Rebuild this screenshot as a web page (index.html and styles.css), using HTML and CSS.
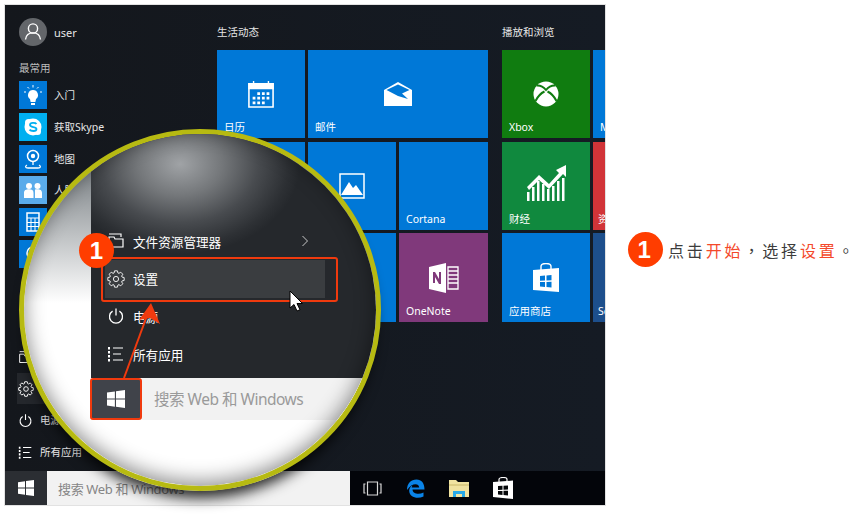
FILE: index.html
```html
<!DOCTYPE html>
<html lang="zh-CN">
  <head>
    <meta charset="UTF-8" />
    <title>点击开始，选择设置</title>
    <link rel="stylesheet" href="styles.css">
  </head>
  <body>
    <main class="page">
      <section class="screen">
        <div class="desktop">
          <nav class="menu">
            <div class="account">
              <span class="avatar">
                <svg viewBox="0 0 28 28" width="28" height="28"><circle cx="14" cy="10.5" r="4.6" fill="none" stroke="#fff" stroke-width="1.4"/><path d="M6.500 21.500c.6-4.500 3.500-6.600 7.500-6.600s6.900 2.100 7.500 6.600" fill="none" stroke="#fff" stroke-width="1.4"/></svg>
              </span>
              <span>user</span>
            </div>
            <h2 class="menu-title">最常用</h2>
            <ul class="apps">
              <li class="app">
                <span class="app-icon">
                  <svg viewBox="0 0 28 28" width="28" height="28"><path d="M14 9a5 5 0 0 1 3 9l-.6 3h-4.800l-.6-3a5 5 0 0 1 3-9z" fill="#fff"/><rect x="12" y="22" width="4" height="2" fill="#fff"/><path d="M14 4v2.500M7 11H5M23 11h-2M8.500 6l1.500 1.500M19.500 6L18 7.500" stroke="#fff" stroke-width="1"/></svg>
                </span>
                入门
              </li>
              <li class="app">
                <span class="app-icon app-icon-skype">
                  <svg viewBox="0 0 28 28" width="28" height="28"><circle cx="14" cy="14" r="8.500" fill="#fff"/><circle cx="9.500" cy="9.500" r="3.500" fill="#fff"/><circle cx="18.500" cy="18.500" r="3.500" fill="#fff"/><path d="M17.500 11c-1-1.300-6.500-1.800-6.500 1 0 2.800 6.500 1.300 6.500 4 0 2.800-5.700 2.300-7 .6" fill="none" stroke="#00aff0" stroke-width="1.800"/></svg>
                </span>
                获取Skype
              </li>
              <li class="app">
                <span class="app-icon">
                  <svg viewBox="0 0 28 28" width="28" height="28"><circle cx="14" cy="11" r="5.500" fill="none" stroke="#fff" stroke-width="1.500"/><circle cx="14" cy="11" r="2.200" fill="#fff"/><path d="M8 20c-2 1-2 3 1 3h10c3 0 3-2 1-3M14 17v3" fill="none" stroke="#fff" stroke-width="1.300"/></svg>
                </span>
                地图
              </li>
              <li class="app">
                <span class="app-icon app-icon-people">
                  <svg viewBox="0 0 28 28" width="28" height="28"><circle cx="10" cy="10" r="3" fill="#fff"/><circle cx="18.500" cy="10" r="3" fill="#fff"/><path d="M5 22v-5c0-3 2-3.800 5-3.800s4.500 1 4.500 3.800v5zM16 13.500c3-.8 7-.5 7 3.500v5h-7z" fill="#fff"/></svg>
                </span>
                人脉
              </li>
              <li class="app">
                <span class="app-icon">
                  <svg viewBox="0 0 28 28" width="28" height="28"><rect x="8" y="5" width="12" height="18" fill="none" stroke="#fff" stroke-width="1.500"/><path d="M8 10h12M8 14.500h12M8 18.500h12M12 10v13M16 10v13" stroke="#fff"/></svg>
                </span>
                计算器
              </li>
              <li class="app">
                <span class="app-icon">
                  <svg viewBox="0 0 28 28" width="28" height="28"><circle cx="14" cy="13" r="6" fill="none" stroke="#fff" stroke-width="1.500"/></svg>
                </span>
                闹钟
              </li>
            </ul>
            <ul class="system">
              <li class="app">
                <svg viewBox="0 0 18 18" width="15" height="15"><path d="M2 5h5l1 2h8v8H2zM2 2h12v3" fill="none" stroke="#fff" stroke-width="1.200"/></svg>
                文件资源管理器
              </li>
              <li class="app app-current">
                <svg viewBox="0 0 18 18" width="16" height="16"><circle cx="9" cy="9" r="2.600" fill="none" stroke="#fff" stroke-width="1.100"/><path d="M14.990 7.050L17.170 7.560V10.440L14.990 10.950L14.610 11.860L15.800 13.760L13.760 15.800L11.860 14.610L10.950 14.990L10.440 17.170H7.560L7.050 14.990L6.140 14.610L4.240 15.800L2.200 13.760L3.390 11.860L3.010 10.950L.83 10.440V7.560L3.010 7.050L3.390 6.140L2.200 4.240L4.240 2.200L6.140 3.390L7.050 3.010L7.560 .83H10.440L10.950 3.010L11.860 3.390L13.760 2.200L15.800 4.240L14.610 6.140z" fill="none" stroke="#fff" stroke-width="1.100"/></svg>
                设置
              </li>
              <li class="app">
                <svg viewBox="0 0 18 18" width="15" height="15"><path d="M5.600 4.100a6.500 6.500 0 1 0 6.800 0M9 1.500v7" fill="none" stroke="#fff" stroke-width="1.300"/></svg>
                电源
              </li>
              <li class="app">
                <svg viewBox="0 0 18 18" width="15" height="15"><path d="M2 2v2.500M2 6v2.500M2 10v2.500M2 14v2.500" stroke="#fff" stroke-width="2"/><path d="M6 3h10M6 9h8M6 15h10" stroke="#fff" stroke-width="1.200"/></svg>
                所有应用
              </li>
            </ul>
          </nav>

          <section class="group group-live">
            <h2 class="group-title">生活动态</h2>
            <div class="tiles">
              <div class="tile">
                <svg viewBox="0 0 28 30" width="26" height="28"><path d="M1 4h26v25H1z" fill="none" stroke="#fff" stroke-width="1.700"/><path d="M1 4h26v5H1zM6 1v5M22 1v5" fill="#fff" stroke="#fff" stroke-width="1.500"/><path d="M10 13h3v3h-3zM15 13h3v3h-3zM20 13h3v3h-3zM5 18h3v3H5zM10 18h3v3h-3zM15 18h3v3h-3zM20 18h3v3h-3zM5 23h3v3H5zM10 23h3v3h-3zM15 23h3v3h-3z" fill="#fff"/></svg>
                <span class="tile-name">日历</span>
              </div>
              <div class="tile tile-wide">
                <svg viewBox="0 0 28 24" width="28" height="24"><path d="M0 8L14 0l14 8v16H0z" fill="#fff"/><path d="M2.500 8L14 2.500 25.500 8 18 11.500l6 5.500-10-3z" fill="#0078d7"/></svg>
                <span class="tile-name">邮件</span>
              </div>
              <div class="tile"></div>
              <div class="tile">
                <svg viewBox="0 0 26 26" width="26" height="26"><path d="M1 1h24v24H1z" fill="none" stroke="#fff" stroke-width="1.500"/><path d="M2 22l8-13 4 6 3-3 7 10z" fill="#fff"/></svg>
              </div>
              <div class="tile">
                <span class="tile-name">Cortana</span>
              </div>
              <div class="tile"></div>
              <div class="tile"></div>
              <div class="tile tile-onenote">
                <svg viewBox="0 0 30 30" width="30" height="30"><path d="M0 4l17-4v30L0 26z" fill="#fff"/><path d="M4 20V9h2l4 7V9h2v12h-2l-4-7v6z" fill="#80397b"/><path d="M19 4h10v22H19zM19 8h10M19 12h10M19 16h10M19 20h10" fill="none" stroke="#fff" stroke-width="1.300"/></svg>
                <span class="tile-name">OneNote</span>
              </div>
            </div>
          </section>

          <section class="group">
            <h2 class="group-title">播放和浏览</h2>
            <div class="tiles tiles-cut">
              <div class="tile tile-xbox">
                <svg viewBox="0 0 26 26" width="26" height="26"><circle cx="13" cy="13" r="12.500" fill="#fff"/><path d="M3.500 4.500Q9 4 13 9Q17 4 22.500 4.500M2.500 20Q6 13 11.500 10.500M23.500 20Q20 13 14.500 10.500" fill="none" stroke="#107c10" stroke-width="2"/></svg>
                <span class="tile-name">Xbox</span>
              </div>
              <div class="tile"><span class="tile-name">M</span></div>
              <div class="tile tile-finance">
                <svg viewBox="0 0 40 38" width="40" height="38"><path d="M1 23L13 11l10 9L33 9l-3-3 10-5v12l-3-3-14 15-10-9L3 26z" fill="#fff"/><path d="M1 37v-9h2.500v9zM6 37V23h2.500v14zM11 37V17h2.500v20zM16 37V20h2.500v17zM21 37V25h2.500v12zM26 37V22h2.500v15zM31 37V17h2.500v20zM36 37V14h2.500v23z" fill="#fff"/></svg>
                <span class="tile-name">财经</span>
              </div>
              <div class="tile tile-red"><span class="tile-name tile-name-cut">资</span></div>
              <div class="tile">
                <svg viewBox="0 0 26 30" width="26" height="30"><path d="M0 7l26-2v24L0 27z" fill="#fff"/><path d="M8 7V3.500C8 1 10 .5 13 .5s5 .5 5 3V6" fill="none" stroke="#fff" stroke-width="1.400"/><path d="M7 13l5-.5v5l-5 .2zM13.500 12.400l5-.4v5.200l-5 .2zM7 19l5-.1v5l-5-.3zM13.500 18.900l5-.1v5.600l-5-.4z" fill="#0078d7"/></svg>
                <span class="tile-name">应用商店</span>
              </div>
              <div class="tile tile-solitaire"><span class="tile-name tile-name-cut">So</span></div>
            </div>
          </section>
        </div>

        <footer class="taskbar">
          <span class="start">
            <svg viewBox="0 0 16 16" width="16" height="16"><path d="M0 2.300l7-1v6.300H0zM8 1.100L16 0v7.600H8zM0 8.500h7v6.300l-7-1zM8 8.500h8V16l-8-1.100z" fill="#fff"/></svg>
          </span>
          <span class="search">搜索 Web 和 Windows</span>
          <span class="tray">
            <svg viewBox="0 0 19 15" width="19" height="15"><path d="M4.500 1h10v13h-10zM2.500 3H1v9h1.500M16.500 3H18v9h-1.500" fill="none" stroke="#d8d8d8" stroke-width="1.200"/></svg>
            <svg viewBox="0 0 19 19" width="19" height="19"><path d="M1 11C1 4.500 5 .5 10.500.5 15.500.5 18.500 4 18.500 10.500H6.500c.3 4.500 6.500 5.500 11 3v4C11 20.500 3 18 3.200 11.500 3.500 9 4.500 7.500 6.500 6.500c-.5 1-.7 1.500-.8 2h7.500C13 4 6 3.500 1 11z" fill="#0a84e8"/></svg>
            <svg viewBox="0 0 20 17" width="20" height="17"><path d="M0 0h7l2 2h11v15H0z" fill="#f0e3a0"/><path d="M0 5h20" stroke="#c9b868"/><path d="M4 17v-6h12v6h-3v-3H7v3z" fill="#27a9e8"/></svg>
            <svg viewBox="0 0 20 22" width="20" height="22"><path d="M0 5l20-1.500V22L0 20z" fill="#fff"/><path d="M6 5V2.500C6 1 8 .5 10 .5s4 .5 4 2V4" fill="none" stroke="#fff" stroke-width="1.200"/><path d="M5 9l4.500-.3v4L5 13zM10.500 8.700l4.500-.3v4.200l-4.500.2zM5 14l4.500-.1v4L5 17.600zM10.500 13.800l4.500-.1v4.700l-4.500-.4z" fill="#05070a"/></svg>
          </span>
        </footer>
      </section>

      <section class="lens">
        <div class="lens-panel">
          <div class="lens-row">
            <svg viewBox="0 0 18 18" width="18" height="18"><path d="M2 5h5l1 2h8v8H2zM2 2h12v3" fill="none" stroke="#fff" stroke-width="1.200"/></svg>
            文件资源管理器
            <svg class="chevron" viewBox="0 0 8 12" width="8" height="12"><path d="M1.500 1l5 5-5 5" fill="none" stroke="#c8c8c8"/></svg>
          </div>
          <div class="lens-row lens-row-active">
            <svg viewBox="0 0 18 18" width="18" height="18"><circle cx="9" cy="9" r="2.600" fill="none" stroke="#fff" stroke-width=".9"/><path d="M14.990 7.050L17.170 7.560V10.440L14.990 10.950L14.610 11.860L15.800 13.760L13.760 15.800L11.860 14.610L10.950 14.990L10.440 17.170H7.560L7.050 14.990L6.140 14.610L4.240 15.800L2.200 13.760L3.390 11.860L3.010 10.950L.83 10.440V7.560L3.010 7.050L3.390 6.140L2.200 4.240L4.240 2.200L6.140 3.390L7.050 3.010L7.560 .83H10.440L10.950 3.010L11.860 3.390L13.760 2.200L15.800 4.240L14.610 6.140z" fill="none" stroke="#fff" stroke-width=".9"/></svg>
            设置
          </div>
          <div class="lens-row">
            <svg viewBox="0 0 18 18" width="18" height="18"><path d="M5.600 4.100a6.500 6.500 0 1 0 6.800 0M9 1.500v7" fill="none" stroke="#fff" stroke-width="1.300"/></svg>
            电源
          </div>
          <div class="lens-row">
            <svg viewBox="0 0 18 18" width="18" height="18"><path d="M2 2v2.500M2 6v2.500M2 10v2.500M2 14v2.500" stroke="#fff" stroke-width="2"/><path d="M6 3h10M6 9h8M6 15h10" stroke="#fff" stroke-width="1.200"/></svg>
            所有应用
          </div>
        </div>
        <div class="lens-bar">
          <span class="lens-start">
            <svg viewBox="0 0 16 16" width="18" height="18"><path d="M0 2.300l7-1v6.300H0zM8 1.100L16 0v7.600H8zM0 8.500h7v6.300l-7-1zM8 8.500h8V16l-8-1.100z" fill="#fff"/></svg>
          </span>
          <span class="lens-search">搜索 Web 和 Windows</span>
        </div>
      </section>

      <div class="mark"></div>
      <svg class="arrow" viewBox="0 0 60 90" width="60" height="90"><path d="M6 86L30 21" stroke="#f03a0e" stroke-width="2"/><path d="M33 11l9 21-10-6-11 2z" fill="#f03a0e"/></svg>
      <svg class="cursor" viewBox="0 0 15 22" width="15" height="22"><path d="M1 1v17l4-3.500L8 21l3-1.300-3-6.200h5.500z" fill="#fff" stroke="#000"/></svg>
      <span class="badge badge-lens">1</span>

      <p class="note" lang="zh-TW">
        <span class="badge">1</span>
        <span>点击<em>开始</em>，选择<em>设置</em>。</span>
      </p>
    </main>
  </body>
</html>
```

FILE: styles.css
```css
* {
  box-sizing: border-box;
}

body {
  margin: 0;
  background: #fff;
  font-family: "Noto Sans", "Noto Sans CJK SC", sans-serif;
}

h2,
p,
ul {
  margin: 0;
  padding: 0;
  font-weight: 400;
}

ul {
  list-style: none;
}

svg {
  display: block;
  flex: none;
}

.page {
  position: relative;
  width: 854px;
  height: 522px;
  padding: 5px;
  overflow: hidden;
}

.screen {
  display: flex;
  flex-direction: column;
  width: 600px;
  height: 500px;
  overflow: hidden;
  background: linear-gradient(90deg, #14171c, #151b24);
  outline: 1px solid #e2e2e2;
  color: #e6e6e6;
  font-size: 10.5px;
}

.desktop {
  display: flex;
  flex: 1;
  min-height: 0;
}

/* left column */
.menu {
  display: flex;
  flex-direction: column;
  flex: none;
  width: 212px;
  padding: 13px 0 5px 14px;
}

.account {
  display: flex;
  align-items: center;
  gap: 7px;
  font-size: 11px;
}

.avatar {
  width: 28px;
  height: 28px;
  border-radius: 50%;
  background: #63666a;
}

.menu-title {
  margin: 14px 0 5px;
  font-size: 10.5px;
  line-height: 16px;
  color: #bdbdbd;
}

.apps {
  display: flex;
  flex-direction: column;
  gap: 3.8px;
}

.app {
  display: flex;
  align-items: center;
  gap: 7px;
  height: 28px;
  line-height: 26px;
}

.app-icon {
  width: 28px;
  height: 28px;
  background: #0078d7;
}

.app-icon-skype {
  background: #00aff0;
}

.app-icon-people {
  background: #5aabea;
}

.system {
  display: flex;
  flex-direction: column;
  gap: 3.600px;
  margin-top: auto;
}

.system .app {
  margin-left: -1px;
}

.system .app-current {
  gap: 6px;
  height: 31px;
  margin-block: -1.500px;
  margin-left: -2px;
  padding-left: 1px;
  background: #24272c;
}

/* tiles */
.group {
  flex: none;
  padding-top: 19px;
  padding-right: 14px;
}

.group-title {
  height: 26px;
  font-size: 10.5px;
  line-height: 16px;
}

.tiles {
  display: grid;
  grid-template-columns: 88px 88px 89px;
  grid-template-rows: 88px 88px 89px;
  gap: 3.500px 3px;
}

.tiles-cut {
  grid-template-columns: repeat(2, 88px);
}

.tile {
  position: relative;
  display: flex;
  align-items: center;
  justify-content: center;
  overflow: hidden;
  background: #0078d7;
  color: #fff;
}

.tile-wide {
  grid-column: span 2;
}

.tile-name {
  position: absolute;
  left: 7px;
  bottom: 3px;
  font-size: 10.5px;
  line-height: 16px;
  white-space: nowrap;
}

.tile-name-cut {
  left: 5px;
}

.tile-onenote {
  background: #80397b;
}

.tile-xbox {
  background: #107c10;
}

.tile-finance {
  padding-bottom: 6px;
  background: #10893e;
}

.tile-red {
  background: #d13438;
}

.tile-solitaire {
  background: #1d4f8c;
}

/* taskbar */
.taskbar {
  display: flex;
  flex: none;
  height: 34px;
  background: #03050a;
}

.start {
  display: flex;
  align-items: center;
  justify-content: center;
  width: 42px;
  background: #2b2e33;
}

.search {
  display: flex;
  align-items: center;
  width: 303px;
  padding-left: 11px;
  background: #f2f2f2;
  font-size: 13px;
  letter-spacing: -0.350px;
  color: #868686;
}

.tray {
  display: flex;
  align-items: center;
  gap: 24px;
  padding-left: 13px;
}

/* magnifier */
.lens {
  position: absolute;
  left: 19px;
  top: 129px;
  width: 362px;
  height: 362px;
  overflow: hidden;
  border: 5px solid #b7ba12;
  border-radius: 50%;
  background: linear-gradient(180deg, #7f8589 10%, #ffffff 48%);
  box-shadow: 0 14px 14px -7px rgba(0, 0, 0, 0.85);
  color: #fff;
  font-size: 12.600px;
}

.lens::after {
  content: "";
  position: absolute;
  inset: 0;
  border-radius: 50%;
  box-shadow: inset 0 -4px 20px rgba(0, 0, 0, 0.45);
  pointer-events: none;
}

.lens-panel {
  display: flex;
  flex-direction: column;
  justify-content: flex-end;
  height: 244px;
  margin-left: 67px;
  padding-bottom: 5px;
  background:
    radial-gradient(ellipse 120px 90px at 89px 30px, #a0a3a6, #74777a 35%, #484b4f 65%, #2d3034 90%, transparent),
    #25282c;
}

.lens-row {
  display: flex;
  align-items: center;
  gap: 8px;
  width: 220px;
  height: 37.700px;
  margin-left: 14px;
  padding-left: 2px;
}

.lens-row-active {
  background: #3a3d40;
}

.chevron {
  margin-left: auto;
  margin-right: 16px;
}

.lens-bar {
  display: flex;
  height: 42px;
  margin-left: 66px;
}

.lens-start {
  display: flex;
  align-items: center;
  justify-content: center;
  flex: none;
  width: 52px;
  border: 2px solid #f03a0e;
  border-radius: 3px;
  background: #40434a;
}

.lens-search {
  flex: 1;
  padding-left: 12px;
  background: #f2f2f2;
  font-size: 15.500px;
  letter-spacing: -0.500px;
  line-height: 42px;
  color: #9a9a9a;
}

.mark {
  position: absolute;
  left: 101px;
  top: 257px;
  width: 237px;
  height: 45px;
  border: 2px solid #f03a0e;
  border-radius: 3px;
}

.arrow {
  position: absolute;
  left: 118px;
  top: 292px;
}

.cursor {
  position: absolute;
  left: 289px;
  top: 290px;
}

.badge {
  display: flex;
  align-items: center;
  justify-content: center;
  flex: none;
  width: 35px;
  height: 35px;
  border-radius: 50%;
  background: #ff3d00;
  font-family: "Liberation Sans", sans-serif;
  font-size: 24px;
  font-weight: 700;
  color: #fff;
}

.badge-lens {
  position: absolute;
  left: 79px;
  top: 233px;
}

.note {
  position: absolute;
  left: 628px;
  top: 232px;
  display: flex;
  align-items: center;
  gap: 5px;
  font-family: "Noto Sans CJK TC", sans-serif;
  font-size: 16px;
  letter-spacing: 2.850px;
  white-space: nowrap;
  color: #3c3c3c;
}

.note em {
  font-style: normal;
  color: #f4492b;
}
```
